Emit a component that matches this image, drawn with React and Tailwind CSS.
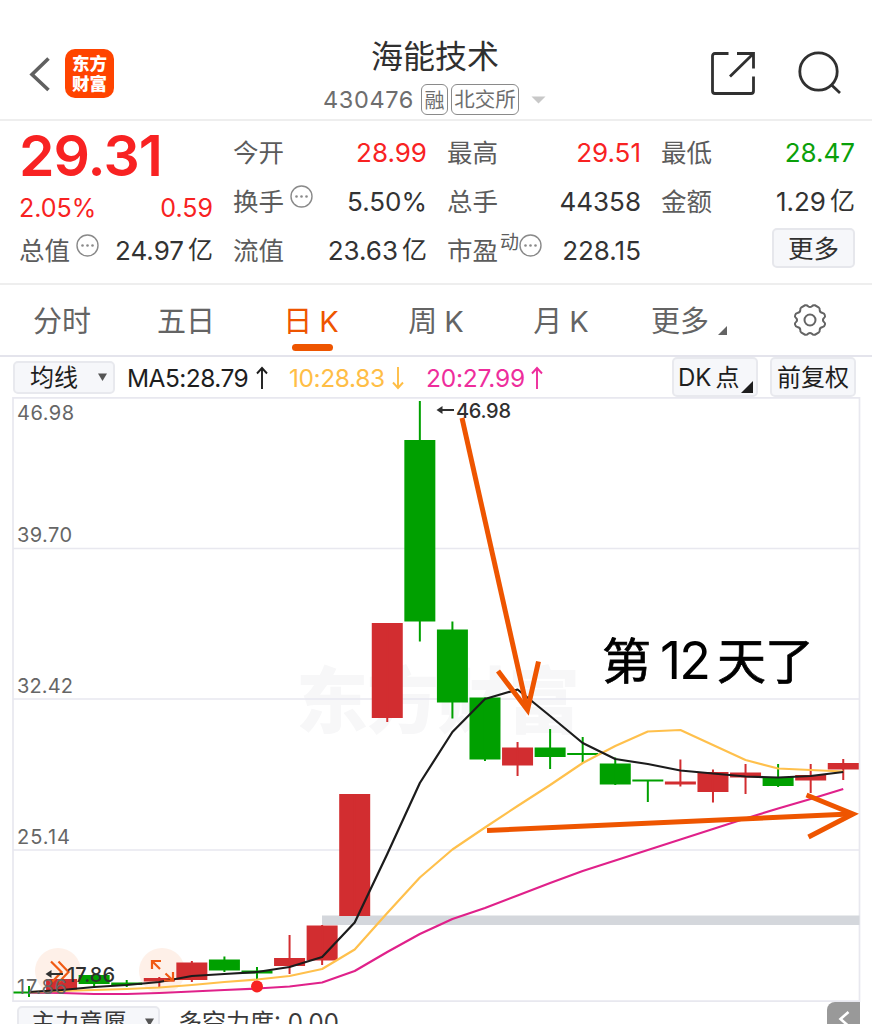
import React from 'react';
import clsx from 'clsx';

const RED = '#d22d30';
const GREEN = '#00a000';

// [body top, body bottom, wick top, wick bottom, color]
const candles = [
    [991.5, 993.5, 986, 997, GREEN],
    [979, 990, 979, 990, RED],
    [975, 984, 974, 987, GREEN],
    [982.5, 985, 980, 987, GREEN],
    [978, 981.5, 977, 987, RED],
    [962.5, 980, 961, 982, RED],
    [959.5, 970.5, 956.5, 972, GREEN],
    [970.5, 973.5, 967, 980, GREEN],
    [958, 966, 935, 974, RED],
    [925.5, 960.5, 925, 965, RED],
    [794, 916, 794, 916, RED],
    [623, 718, 623, 722, RED],
    [440, 621.5, 401, 641.5, GREEN],
    [629.5, 702.5, 621.5, 718.5, GREEN],
    [697.5, 759.5, 697.5, 761, GREEN],
    [747.5, 765.5, 742, 776, RED],
    [747.5, 757, 729, 769, GREEN],
    [753, 755, 737, 763, GREEN],
    [763.5, 784.5, 757.5, 785, GREEN],
    [779.5, 781.5, 780, 802, GREEN],
    [781.5, 784.5, 759.5, 786.5, RED],
    [772, 792, 769.5, 802.5, RED],
    [772.5, 777.5, 764, 794, RED],
    [777, 786, 764, 787, GREEN],
    [775, 780.5, 764, 793, RED],
    [763, 769.5, 759, 780, RED],
];

const ma5 = [992, 990, 987, 985, 982, 976, 974, 972, 967, 957, 922.5, 854, 783, 732, 699, 689.5, 716, 743, 759, 764, 770.5, 773.5, 776.5, 777.5, 776, 772];
const ma10 = [992, 991, 990, 989, 987.5, 985, 982, 979.5, 976, 969, 949.5, 913, 877.5, 849.5, 827.5, 806, 785, 763, 746, 731.5, 730, 745, 760, 768.5, 770, 771.5];
const ma20 = [992.5, 993, 994, 994, 993, 991.5, 990, 988.5, 986.5, 982.5, 971, 952, 934, 919, 908, 895.5, 883, 871, 860.5, 850, 839.5, 829, 818.5, 808.5, 799, 789];

const xAt = (i) => 29 + i * 32.57;
const toPoints = (values) => values.map((y, i) => `${xAt(i)},${y}`).join(' ');

const tabs = [
    { label: '分时', width: 'w-[124px]' },
    { label: '五日', width: 'w-[124px]' },
    { label: '日K', width: 'w-[128px]', active: true },
    { label: '周K', width: 'w-[122px]' },
    { label: '月K', width: 'w-[128px]' },
];

function MoreDots() {
    return (
        <svg className="w-[23px] h-[23px] shrink-0" viewBox="0 0 23 23" fill="none">
            <circle cx="11.5" cy="11.5" r="10.5" stroke="#8a8a8a" strokeWidth="1.4" />
            <circle cx="6.5" cy="11.5" r="1.3" fill="#8a8a8a" />
            <circle cx="11.5" cy="11.5" r="1.3" fill="#8a8a8a" />
            <circle cx="16.5" cy="11.5" r="1.3" fill="#8a8a8a" />
        </svg>
    );
}

function Stat({ label, value, unit, sup, dots, color = 'text-[#333]' }) {
    return (
        <div className="flex h-[49px] items-center justify-between whitespace-nowrap">
            <div className="flex items-center pt-[2px] text-[25.5px] text-[#5c5c5c]">
                {label}
                {sup && <span className="text-[19px] -mt-4 ml-0.5">{sup}</span>}
                {dots && <span className={clsx('-mt-[13px]', !sup && 'ml-1.5')}><MoreDots /></span>}
            </div>
            <div className={clsx('flex items-center text-[26px]', color)}>
                {value}
                {unit && <span className="text-[25px] ml-1 pt-[1px]">{unit}</span>}
            </div>
        </div>
    );
}

function Header() {
    return (
        <header className="flex h-[121px] items-start justify-between border-b-2 border-[#eeeeee]">
            <div className="flex items-center pt-[49px] pl-[29px] w-[300px]">
                <svg className="w-[22px] h-[36px]" viewBox="0 0 22 36" fill="none">
                    <path d="M19.500 2.500 3 18.500l16.500 15.500" stroke="#606060" strokeWidth="3.600" />
                </svg>
                <div className="ml-[14px] flex h-[49px] w-[49px] flex-col items-center justify-center rounded-[10px] bg-[#ff4400] text-[17.500px] leading-[20px] font-black text-white">
                    <span>东方</span>
                    <span>财富</span>
                </div>
            </div>
            <div className="flex flex-col items-center pt-[34px]">
                <h1 className="-ml-[2px] text-[32px] leading-[46px] text-[#303030]">海能技术</h1>
                <div className="mt-[4px] -ml-[3px] flex h-[31px] items-center text-[#6e6e6e]">
                    <span className="text-[23.500px] tracking-[0.600px]">430476</span>
                    <span className="ml-[7px] flex h-[31px] w-[27px] items-center justify-center rounded-[6px] border-[1.500px] border-[#8a8a8a] pt-[2px] text-[20px]">融</span>
                    <span className="ml-[3px] flex h-[31px] w-[68px] items-center justify-center rounded-[6px] border-[1.500px] border-[#8a8a8a] pt-[2px] text-[20.500px]">北交所</span>
                    <svg className="ml-[12px] h-[8px] w-[15px]" viewBox="0 0 15 8">
                        <path d="M0.500 0.500h14l-7 7z" fill="#c8c8c8" />
                    </svg>
                </div>
            </div>
            <div className="flex w-[300px] justify-end gap-[42px] pt-[50px] pr-[30px]">
                <svg className="h-[46px] w-[46px]" viewBox="0 0 46 46" fill="none" stroke="#303030" strokeWidth="2.800">
                    <path d="M18.500 3.500H5q-2.500 0-2.500 2.500v35q0 2.500 2.500 2.500h36q2.500 0 2.500-2.500V26.500M27 3.500h16.500v15M43 4 20 26.500" />
                </svg>
                <svg className="h-[46px] w-[44px]" viewBox="0 0 44 46" fill="none" stroke="#303030" strokeWidth="2.800">
                    <circle cx="20.500" cy="21.500" r="18.700" />
                    <path d="m33 34.500 9 8.500" />
                </svg>
            </div>
        </header>
    );
}

function Quote() {
    return (
        <section className="grid h-[164px] grid-cols-4 gap-x-5 border-b-2 border-[#eeeeee] pt-[7px] pr-[17px] pl-[19px]">
            <div>
                <div className="flex h-[56px] items-center text-[57px] font-semibold text-[#f82222] tracking-[-0.900px]">29.31</div>
                <div className="flex h-[42px] items-center justify-between pt-[8px] text-[25px] text-[#f82222]">
                    <span>2.05%</span>
                    <span>0.59</span>
                </div>
                <Stat label="总值" dots value="24.97" unit="亿" />
            </div>
            <div>
                <Stat label="今开" value="28.99" color="text-[#f82222]" />
                <Stat label="换手" dots value="5.50%" />
                <Stat label="流值" value="23.63" unit="亿" />
            </div>
            <div>
                <Stat label="最高" value="29.51" color="text-[#f82222]" />
                <Stat label="总手" value="44358" />
                <Stat label="市盈" sup="动" dots value="228.15" />
            </div>
            <div>
                <Stat label="最低" value="28.47" color="text-[#0aa00a]" />
                <Stat label="金额" value="1.29" unit="亿" />
                <div className="flex h-[44px] items-center justify-end">
                    <button className="h-[40px] w-[83px] rounded-[5px] border-2 border-[#e6e7ec] bg-[#f6f7fa] pt-[2px] text-[25.500px] leading-none text-[#303030]">更多</button>
                </div>
            </div>
        </section>
    );
}

function Tabs() {
    return (
        <nav className="flex h-[72px] items-center border-b-2 border-[#e4e4ec] text-[29px] text-[#646464]">
            {tabs.map((tab) => (
                <div
                    key={tab.label}
                    className={clsx('relative flex h-full items-center justify-center pt-[3px]', tab.width, tab.active && 'text-[#ee5500]')}
                >
                    {tab.label.endsWith('K') ? (
                        <span className="-ml-[2px]">{tab.label[0]}<span className="ml-[7px]">K</span></span>
                    ) : (
                        <span>{tab.label}</span>
                    )}
                    {tab.active && <span className="absolute bottom-[4px] h-[7px] w-[41px] rounded-full bg-[#ee5500]"></span>}
                </div>
            ))}
            <div className="flex w-[128px] items-center pt-[3px] pl-[25px]">
                <span>更多</span>
                <svg className="mt-[18px] ml-[9px] h-[9px] w-[9px]" viewBox="0 0 9 9">
                    <path d="M9 0v9H0z" fill="#646464" />
                </svg>
            </div>
            <svg className="ml-[38px] h-[34px] w-[36px]" viewBox="0 0 36 34" fill="none" stroke="#646464" strokeWidth="2">
                <path d="M13 2.300Q15 1.800 16 3.200Q18 4.800 20 3.200Q21 1.800 23 2.300L26.500 4.300Q28 5.500 27.700 7Q27.700 9.500 30.700 10Q32.400 10.300 33 12.500Q33.500 14 32 15Q29.800 17 32 19Q33.500 20 33 21.500Q32.400 23.700 30.700 24Q27.700 24.500 27.700 27Q28 28.500 26.500 29.700L23 31.700Q21 32.200 20 30.800Q18 29.200 16 30.800Q15 32.200 13 31.700L9.500 29.700Q8 28.500 8.300 27Q8.300 24.500 5.300 24Q3.600 23.700 3 21.500Q2.500 20 4 19Q6.200 17 4 15Q2.500 14 3 12.500Q3.600 10.300 5.300 10Q8.300 9.500 8.300 7Q8 5.500 9.500 4.300Z" />
                <circle cx="18" cy="17" r="5.500" />
            </svg>
        </nav>
    );
}

function Arrow({ down }) {
    return (
        <svg className="h-[24px] w-[12px] shrink-0" viewBox="0 0 12 24" fill="none" stroke="currentColor" strokeWidth="1.900">
            <path d={down ? 'M6 1v21M1 16.500 6 22l5-5.500' : 'M6 23V2M1 7.500 6 2l5 5.500'} />
        </svg>
    );
}

function Indicators() {
    return (
        <div className="flex h-[40px] items-center pl-[13px] text-[24.500px] whitespace-nowrap text-[#1e1e1e]">
            <button className="flex h-[33px] w-[102px] items-center rounded-[5px] border-2 border-[#e8e9ee] bg-[#f6f7fa] pl-[15px] text-[24px] leading-none">
                <span className="pt-[2px]">均线</span>
                <svg className="ml-[20px] h-[9px] w-[9px]" viewBox="0 0 9 9">
                    <path d="M0 0.500h9L4.500 8z" fill="#555" />
                </svg>
            </button>
            <span className="ml-[12px] flex w-[141px] items-center justify-between pt-[2px] tracking-[-0.550px]">MA5:28.79<Arrow /></span>
            <span className="ml-[21px] flex w-[115px] items-center justify-between pt-[2px] tracking-[-0.400px] text-[#ffbe46]">10:28.83<Arrow down /></span>
            <span className="ml-[22px] flex w-[117px] items-center justify-between pt-[2px] tracking-[-0.200px] text-[#ee2d9c]">20:27.99<Arrow /></span>
            <div className="ml-auto flex gap-[12px] pr-[16px] text-[24px] leading-none">
                <button className="flex h-[40px] w-[86px] items-center rounded-[5px] border-2 border-[#e8e9ee] bg-[#f6f7fa] pl-[4px]">
                    <span className="pt-[2px]">DK<span className="ml-1">点</span></span>
                    <svg className="mt-[20px] ml-[2px] h-[12px] w-[12px] shrink-0" viewBox="0 0 12 12">
                        <path d="M12 0v12H0z" fill="#1e1e1e" />
                    </svg>
                </button>
                <button className="flex h-[40px] w-[86px] items-center justify-center rounded-[5px] border-2 border-[#e8e9ee] bg-[#f6f7fa] pt-[2px]">前复权</button>
            </div>
        </div>
    );
}

function Chart() {
    return (
        <svg className="block h-[605px] w-[872px]" viewBox="0 397 872 605" fill="none">
            <text x="296" y="727" fontSize="72" fontWeight="900" fill="#f7f7f8" textLength="284">东方财富</text>
            <g stroke="#e8e8ef" strokeWidth="1.700">
                <path d="M13 397.900H859.500V1001.200H13Z" />
                <path d="M13 548.500H859M13 699H859M13 850H859" />
            </g>
            <rect x="322" y="915.500" width="537.500" height="9.500" fill="#d4d7dc" />

            {/* Floating tool buttons */}
            <circle cx="58" cy="971" r="23" fill="#fef0e8" />
            <circle cx="162" cy="971" r="23" fill="#fef0e8" />

            {candles.map(([top, bottom, high, low, color], i) => (
                <g key={i} fill={color}>
                    <rect x={i === 0 ? 13.5 : xAt(i) - 15.5} y={top} width="31" height={bottom - top} />
                    <rect x={xAt(i) - 1} y={high} width="2" height={low - high} />
                </g>
            ))}

            <g strokeWidth="2.200" strokeLinejoin="round">
                <polyline points={toPoints(ma20)} stroke="#e0218a" />
                <polyline points={toPoints(ma10)} stroke="#ffc04c" />
                <polyline points={toPoints(ma5)} stroke="#1c1c1c" />
            </g>
            <circle cx="257" cy="986.500" r="6" fill="#f82222" />

            <g stroke="#f05a14" strokeWidth="2.200">
                <path d="M51 961.500 61.500 972 52 982M58.500 961.500 68.500 972 59 982" />
                <path d="M152 969V961H161M152 961 160 969M173 972V980.500H164M173 980.500 165.500 973.500" />
            </g>

            <g fill="#666" fontSize="20">
                <text x="17" y="419.500" textLength="57">46.98</text>
                <text x="17" y="541.500" textLength="55">39.70</text>
                <text x="17" y="692.500" textLength="56">32.42</text>
                <text x="17" y="843.500" textLength="53">25.14</text>
                <text x="17" y="993.500" textLength="50">17.86</text>
            </g>
            <g fill="#303030" fontSize="20" fontWeight="500">
                <text x="456" y="417.500" textLength="55">46.98</text>
                <text x="67" y="982" textLength="48">17.86</text>
            </g>
            <g stroke="#303030" strokeWidth="2">
                <path d="M438 410H454" />
                <path d="M47 974H63" />
            </g>
            <path d="M436.500 410 442.500 406V414ZM45.500 974 51.500 970V978Z" fill="#303030" />

            {/* Hand-drawn annotations */}
            <g fill="#000" stroke="#000" strokeWidth="0.700">
                <text x="602" y="679" fontSize="49">第</text>
                <text x="660" y="678.500" fontSize="52" textLength="51" strokeWidth="0">12</text>
                <text x="717" y="679" fontSize="49" textLength="97">天了</text>
            </g>
            <g stroke="#ee5500" strokeWidth="5">
                <path d="M462 418 527 708" />
                <path d="M498 671 527.500 710 538.500 661.500" />
                <path d="M487 830.500 850 814" />
                <path d="M806.500 795 853 814 808.500 837" />
            </g>
        </svg>
    );
}

function BottomBar() {
    return (
        <div className="flex h-[22px] items-start overflow-hidden pl-[17px] text-[24px] whitespace-nowrap text-[#3a3a3a]">
            <div className="mt-[4px] flex h-[33px] w-[143px] shrink-0 items-center rounded-[5px] border-2 border-[#e8e9ee] bg-[#f6f7fa] pl-[12px] leading-none">
                主力意愿
                <svg className="ml-[18px] h-[9px] w-[9px]" viewBox="0 0 9 9">
                    <path d="M0 0.500h9L4.500 8z" fill="#555" />
                </svg>
            </div>
            <span className="mt-[4px] ml-[18px] leading-[33px]">多空力度: 0.00</span>
            <div className="mr-[12px] ml-auto flex h-[33px] w-[33px] items-center justify-center rounded-tl-[8px] bg-[#999]">
                <svg className="h-[18px] w-[12px]" viewBox="0 0 12 18" fill="none">
                    <path d="M10.500 2 2.500 9l8 7" stroke="#fff" strokeWidth="2.600" />
                </svg>
            </div>
        </div>
    );
}

export default function App() {
    return (
        <div className="h-[1024px] w-[872px] overflow-hidden bg-white font-['Inter','Noto_Sans_CJK_SC',sans-serif]">
            <Header />
            <Quote />
            <Tabs />
            <Indicators />
            <Chart />
            <BottomBar />
        </div>
    );
}
